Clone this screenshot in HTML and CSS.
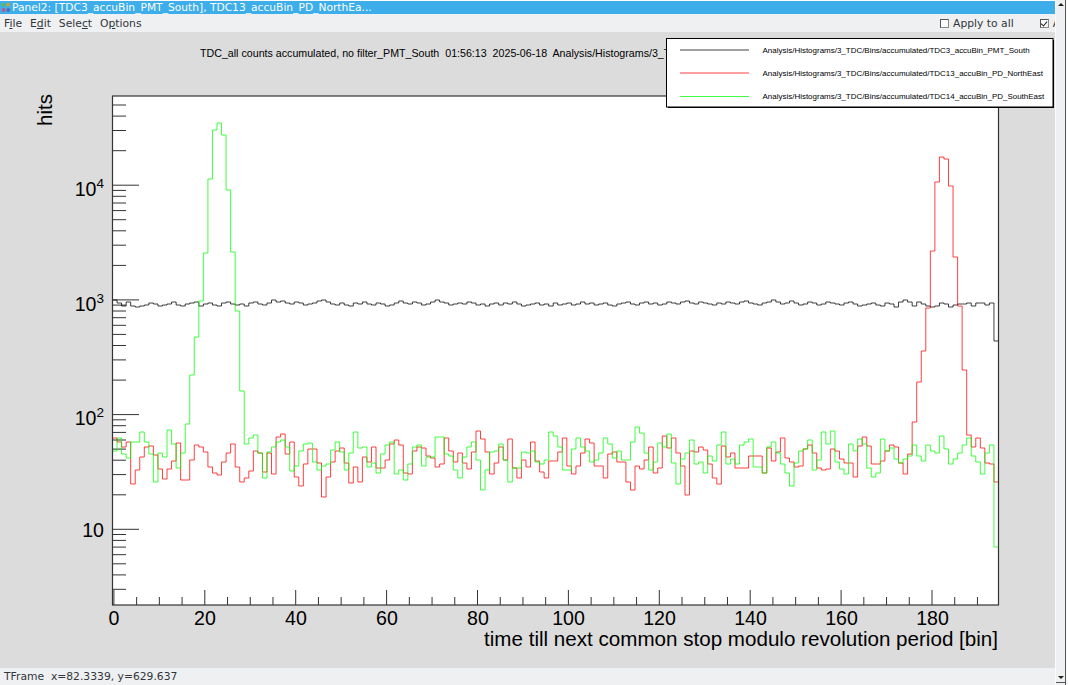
FILE: index.html
```html
<!DOCTYPE html>
<html lang="en">
<head>
    <meta charset="UTF-8">
    <title>Panel2</title>
    <link rel="stylesheet" href="styles.css">
</head>
<body>
    <div class="window">
        <div class="main">
            <div class="titlebar">
                <svg class="logo" width="10" height="11" viewBox="0 0 10 11">
                    <circle cx="2.5" cy="2.8" r="1.9" fill="#5cb85c"/>
                    <circle cx="7.2" cy="2.6" r="1.9" fill="#c9a13b"/>
                    <circle cx="2.6" cy="8" r="1.9" fill="#c2568f"/>
                    <circle cx="7.3" cy="8" r="1.9" fill="#4b6fb5"/>
                </svg>
                <span>Panel2: [TDC3_accuBin_PMT_South], TDC13_accuBin_PD_NorthEa...</span>
            </div>
            <div class="menubar">
                <span class="menu">F<u>i</u>le</span>
                <span class="menu">E<u>d</u>it</span>
                <span class="menu">Sele<u>c</u>t</span>
                <span class="menu">O<u>p</u>tions</span>
                <label class="check first"><i class="box"></i>Apply to all</label>
                <label class="check second"><i class="box checked"></i>A</label>
            </div>
            <svg class="canvas" id="canvas" width="1055" height="636" viewBox="0 32 1055 636">
                <text class="title" x="200" y="57">TDC_all counts accumulated, no filter_PMT_South  01:56:13  2025-06-18  Analysis/Histograms/3_TDC/Bins/accumulated/TDC3_accuBin_PMT_South</text>
                <rect class="frame" x="112.5" y="96" width="886" height="509"/>
                <path class="tick" id="ticks"/>
                <path class="hist" id="histBlack" stroke="#000000"/>
                <path class="hist" id="histRed" stroke="#ff0000"/>
                <path class="hist" id="histGreen" stroke="#00ff00"/>
                <rect class="frame-line" x="112.5" y="96" width="886" height="509"/>

                <text class="num" x="104" y="196" text-anchor="end">10<tspan class="sup" dy="-8">4</tspan></text>
                <text class="num" x="104" y="311" text-anchor="end">10<tspan class="sup" dy="-8">3</tspan></text>
                <text class="num" x="104" y="425" text-anchor="end">10<tspan class="sup" dy="-8">2</tspan></text>
                <text class="num" x="104" y="536.5" text-anchor="end">10</text>

                <text class="num" x="114" y="625" text-anchor="middle">0</text>
                <text class="num" x="205" y="625" text-anchor="middle">20</text>
                <text class="num" x="296" y="625" text-anchor="middle">40</text>
                <text class="num" x="387" y="625" text-anchor="middle">60</text>
                <text class="num" x="478" y="625" text-anchor="middle">80</text>
                <text class="num" x="568.5" y="625" text-anchor="middle">100</text>
                <text class="num" x="659.5" y="625" text-anchor="middle">120</text>
                <text class="num" x="750.5" y="625" text-anchor="middle">140</text>
                <text class="num" x="841.5" y="625" text-anchor="middle">160</text>
                <text class="num" x="932.5" y="625" text-anchor="middle">180</text>

                <text class="axis-title" x="998" y="646" text-anchor="end">time till next common stop modulo revolution period [bin]</text>
                <text class="axis-title" transform="translate(52 126) rotate(-90)">hits</text>

                <rect class="legend-shadow" x="668" y="40" width="386" height="68"/>
                <rect class="legend" x="666.5" y="38.5" width="386.5" height="68.5"/>
                <line class="key" x1="680" y1="50" x2="749" y2="50" stroke="#000000"/>
                <line class="key" x1="680" y1="73" x2="749" y2="73" stroke="#ff0000"/>
                <line class="key" x1="680" y1="96.5" x2="749" y2="96.5" stroke="#00ff00"/>
                <text class="legend-text" x="762.5" y="52.5">Analysis/Histograms/3_TDC/Bins/accumulated/TDC3_accuBin_PMT_South</text>
                <text class="legend-text" x="762.5" y="75.5">Analysis/Histograms/3_TDC/Bins/accumulated/TDC13_accuBin_PD_NorthEast</text>
                <text class="legend-text" x="762.5" y="99">Analysis/Histograms/3_TDC/Bins/accumulated/TDC14_accuBin_PD_SouthEast</text>
            </svg>
            <div class="statusbar">TFrame  x=82.3339, y=629.637</div>
        </div>
        <div class="scrollbar">
            <div class="arrow up"></div>
            <div class="track"></div>
            <div class="arrow down"></div>
        </div>
    </div>
    <script src="plot.js"></script>
</body>
</html>
```

FILE: styles.css
```css
html, body {
    margin: 0;
    padding: 0;
    background-color: #fcfcfc;
}
body {
    width: 1068px;
    height: 685px;
    overflow: hidden;
    font-family: "DejaVu Sans", sans-serif;
    font-size: 10.75px;
    color: #31363b;
}
.window {
    display: flex;
    height: 685px;
}
.main {
    display: flex;
    flex-direction: column;
    width: 1055px;
    overflow: hidden;
}
.titlebar {
    display: flex;
    align-items: center;
    gap: 1px;
    height: 13px;
    margin-top: 1px;
    padding-left: 1px;
    background-color: #3daee9;
    color: #fcfcfc;
    font-size: 10.68px;
    white-space: nowrap;
}
.logo {
    flex: none;
}
.menubar {
    display: flex;
    align-items: center;
    height: 18px;
    background-color: #eff0f1;
    padding-left: 4px;
    white-space: nowrap;
}
.menu {
    margin-right: 8px;
}
.check {
    display: flex;
    align-items: center;
    gap: 4px;
    flex: none;
}
.check.first {
    margin-left: auto;
}
.check.second {
    margin-left: 26px;
    margin-right: -5px;
}
.box {
    display: block;
    position: relative;
    box-sizing: border-box;
    width: 9px;
    height: 9px;
    background-color: #fcfcfc;
    border: 1px solid #8a8a8a;
    border-top-color: #555;
    border-left-color: #555;
}
.box.checked::after {
    content: "";
    position: absolute;
    left: 1px;
    top: 0;
    width: 3px;
    height: 5px;
    border-right: 1.5px solid #222;
    border-bottom: 1.5px solid #222;
    transform: rotate(40deg);
}
.canvas {
    display: block;
    flex: none;
    background-color: #dcdcdc;
}
.canvas text {
    font-family: "Liberation Sans", Arial, sans-serif;
    fill: #000;
    white-space: pre;
}
.canvas .title {
    font-size: 10.67px;
}
.num {
    font-size: 19.6px;
}
.axis-title {
    font-size: 20.6px;
}
.sup {
    font-size: 13.5px;
}
.frame {
    fill: #fff;
}
.frame-line {
    fill: none;
    stroke: #333;
    stroke-width: 1.2;
}
.tick {
    fill: none;
    stroke: #333;
    stroke-width: 1;
}
.hist {
    fill: none;
    stroke-width: 1;
    stroke-opacity: 0.75;
}
.key {
    stroke-opacity: 0.75;
}
.legend {
    fill: #fff;
    stroke: #000;
    stroke-width: 1;
}
.legend-shadow {
    fill: #000;
}
.canvas .legend-text {
    font-size: 7.97px;
}
.statusbar {
    flex: 1;
    display: flex;
    align-items: center;
    padding-left: 4px;
    background-color: #eff0f1;
    white-space: pre;
}
.scrollbar {
    display: flex;
    flex-direction: column;
    width: 11px;
    margin-right: 2px;
    background-color: #eff0f1;
    border-left: 1px solid #fcfcfc;
    border-right: 1px solid #555;
    box-sizing: border-box;
}
.track {
    flex: 1;
}
.arrow {
    position: relative;
    height: 9px;
    background-color: #eff0f1;
}
.arrow::after {
    content: "";
    position: absolute;
    left: 2px;
    border-left: 3px solid transparent;
    border-right: 3px solid transparent;
}
.arrow.up {
    margin-top: 1px;
}
.arrow.up::after {
    top: 2px;
    border-bottom: 3px solid #222;
}
.arrow.down {
    margin-bottom: 2px;
    border-bottom: 1px solid #555;
}
.arrow.down::after {
    top: 3px;
    border-top: 3px solid #222;
}
```

FILE: plot.js
```js
// bin contents as pixel rows, one value per bin
const green = [451,438,454,458,442,442,432,442,454,482,453,457,430,444,468,453,424,375,337,301,
    253,179,130,123,135,190,252,311,391,444,438,435,453,478,452,447,442,440,447,471,
    466,451,444,443,462,470,466,464,450,442,452,470,453,432,448,447,467,463,473,454,
    445,442,474,470,480,464,447,445,466,457,457,437,437,454,456,470,478,457,447,442,
    460,490,470,452,451,444,460,482,468,468,452,453,451,462,464,460,432,436,447,470,
    470,449,438,447,451,462,460,453,438,444,458,451,460,460,442,427,433,453,470,462,
    443,447,434,463,484,459,453,440,464,462,473,456,461,445,432,464,459,464,445,442,
    439,467,467,473,447,442,453,464,473,486,463,451,449,440,470,460,432,444,431,462,
    469,474,444,451,439,444,468,477,473,439,451,448,459,463,459,456,445,456,461,445,
    451,453,436,449,464,459,453,445,438,456,462,474,453,445,547];

const red = [438,442,447,442,484,470,457,447,446,455,469,479,469,461,443,480,480,460,445,447,
    452,467,473,475,462,453,444,467,482,478,471,451,453,472,453,474,437,434,454,442,
    477,486,464,449,449,463,497,477,462,451,448,463,483,467,482,457,462,447,468,468,
    460,444,440,445,473,474,451,447,448,456,458,467,464,438,451,462,453,463,469,452,
    431,439,452,474,463,447,460,439,468,478,460,467,442,461,472,478,461,461,452,438,
    466,474,466,453,439,443,466,466,478,454,452,462,462,482,490,466,469,460,447,473,
    468,436,448,438,453,466,495,451,452,447,450,464,478,484,446,457,453,468,468,468,
    456,456,456,473,448,461,452,438,458,462,467,466,449,445,453,468,470,469,449,451,
    459,463,463,477,446,437,446,464,464,461,451,445,447,463,474,454,422,382,351,308,
    251,182,157,159,186,257,306,370,435,447,438,448,463,464,482];

const black = [300,303,306,302,306,307,306,305,303,304,306,305,304,302,305,306,304,303,302,306,
    304,303,305,306,303,302,304,305,304,306,303,302,304,305,303,300,302,301,303,304,
    302,303,305,304,303,301,300,302,304,305,303,305,306,303,304,302,304,305,303,304,
    306,305,303,301,303,304,302,303,305,304,302,300,302,303,305,304,303,304,302,303,
    305,304,306,304,303,305,303,304,302,304,306,305,304,303,305,304,306,303,305,304,
    303,305,304,302,304,303,305,304,303,305,306,304,303,302,304,305,303,302,304,303,
    305,304,302,303,304,302,301,303,304,302,303,304,305,303,304,302,303,304,302,301,
    303,304,305,303,302,300,302,304,303,301,303,305,304,302,303,305,304,302,303,304,
    305,303,302,304,306,305,304,303,305,306,303,304,307,302,300,302,306,302,304,306,
    307,306,303,304,307,305,304,304,303,306,303,303,305,303,341];

const xLeft = 112.5;
const binW = 886 / 195;

function stepPath(values) {
    let d = `M${xLeft} ${values[0]}`;
    values.forEach((y, i) => {
        const x = xLeft + i * binW;
        d += `V${y}H${(x + binW).toFixed(2)}`;
    });
    return d;
}

function tickPath() {
    let d = '';
    // x axis, small tick every 5, big tick every 20
    for (let v = 0; v <= 190; v += 5) {
        const x = (113.9 + v * 4.545).toFixed(2);
        const len = v % 20 === 0 ? 15 : 8;
        d += `M${x} 605V${605 - len}`;
    }
    // y axis, log scale
    for (let decade = 0; decade <= 4; decade++) {
        for (let k = 1; k <= 9; k++) {
            const y = 529.3 - 114.7 * (decade - 1 + Math.log10(k));
            if (y < 96 || y > 605) continue;
            const len = k === 1 ? 26.5 : 13.5;
            d += `M112.5 ${y.toFixed(1)}H${112.5 + len}`;
        }
    }
    return d;
}

document.getElementById('histBlack').setAttribute('d', stepPath(black));
document.getElementById('histRed').setAttribute('d', stepPath(red));
document.getElementById('histGreen').setAttribute('d', stepPath(green));
document.getElementById('ticks').setAttribute('d', tickPath());
```
